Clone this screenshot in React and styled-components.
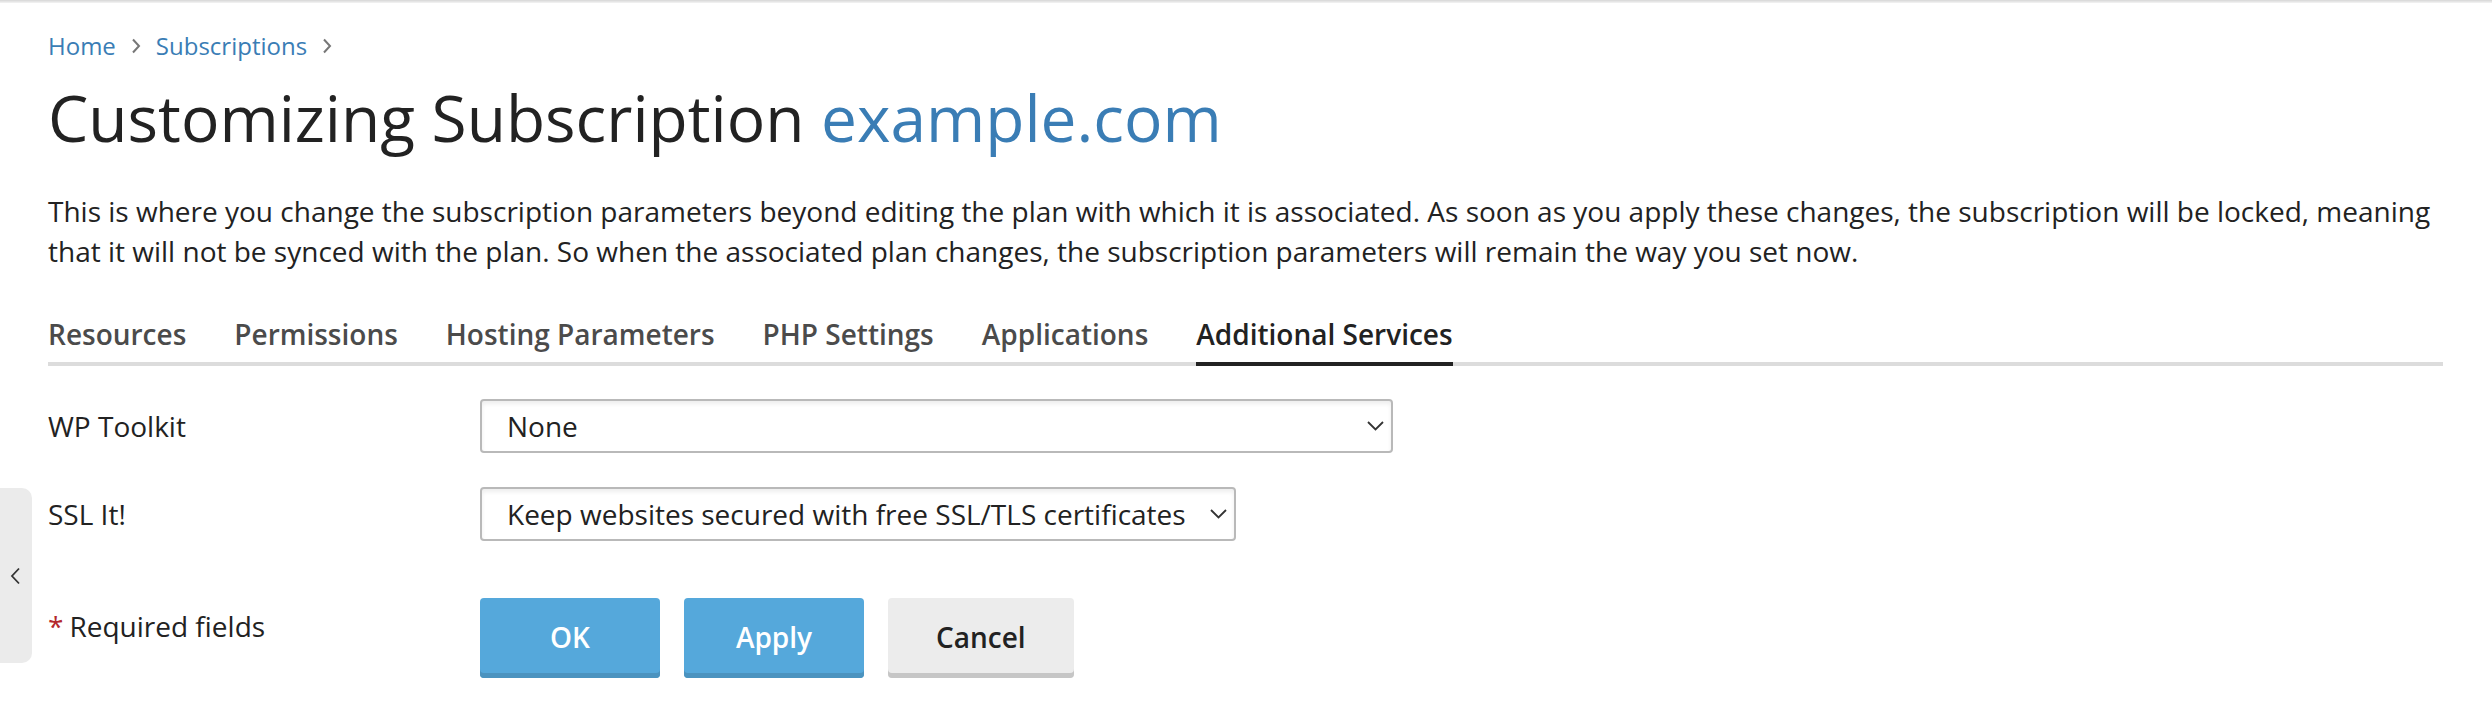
import React from "react";
import styled, { createGlobalStyle } from "styled-components";

const GlobalStyle = createGlobalStyle`
  html, body { margin: 0; padding: 0; background: #fff; }
  body { font-family: "Open Sans", "Noto Sans", sans-serif; color: #222; }
  * { box-sizing: border-box; }
`;

const Page = styled.div`
  position: relative;
  min-height: 712px;
  background: #fff;
`;

const TopEdge = styled.div`
  height: 3px;
  background: linear-gradient(#d6d6d6, #f4f4f4);
`;

const Main = styled.main`
  padding: 25px 49px 0 48px;
`;

const Breadcrumbs = styled.nav`
  display: flex;
  align-items: center;
  gap: 15px;
  font-size: 24px;
  line-height: 35px;
  height: 35px;
`;

const Crumb = styled.a`
  color: #3a7db5;
  text-decoration: none;
`;

const CrumbSep = styled.svg`
  width: 10px;
  height: 16px;
  flex: none;
`;

const Title = styled.h1`
  margin: 15px 0 0;
  font-size: 64px;
  line-height: 80px;
  font-weight: 400;
  color: #222;
  letter-spacing: 0;
`;

const TitleLink = styled.span`
  color: #3a7db5;
`;

const Description = styled.p`
  margin: 33px 0 0;
  font-size: 28px;
  line-height: 40px;
  color: #222;
`;

const Tabs = styled.div`
  display: flex;
  gap: 48px;
  margin-top: 43px;
  border-bottom: 4px solid #dcdcdc;
`;

const Tab = styled.div`
  font-size: 28px;
  line-height: 40px;
  font-weight: 600;
  padding-bottom: 8px;
  margin-bottom: -4px;
  color: ${(p) => (p.$active ? "#222" : "#4b4b4b")};
  border-bottom: 4px solid ${(p) => (p.$active ? "#222" : "transparent")};
`;

const Form = styled.div`
  margin-top: 33px;
  display: flex;
  flex-direction: column;
  gap: 34px;
`;

const Row = styled.div`
  display: flex;
  align-items: ${(p) => (p.$top ? "flex-start" : "center")};
  margin-top: ${(p) => p.$offset || 0}px;
`;

const Label = styled.div`
  width: 432px;
  flex: none;
  font-size: 28px;
  line-height: 40px;
  color: #222;
  padding-top: ${(p) => p.$pad || 0}px;
`;

const Required = styled.span`
  color: #b3282d;
  margin-right: 6px;
`;

const SelectBox = styled.div`
  display: flex;
  align-items: center;
  justify-content: space-between;
  gap: 24px;
  height: 54px;
  width: ${(p) => (p.$width ? `${p.$width}px` : "auto")};
  padding: 0 7px 0 25px;
  border: 2px solid #b9b9b9;
  border-radius: 4px;
  background: #fff;
  box-shadow: inset 0 3px 4px rgba(0, 0, 0, 0.07);
  font-size: 28px;
  line-height: 40px;
  color: #222;
`;

const Chevron = styled.svg`
  width: 17px;
  height: 10px;
  flex: none;
`;

const Buttons = styled.div`
  display: flex;
  gap: 24px;
`;

const Button = styled.button`
  min-width: 180px;
  height: 80px;
  padding: 0 48px 2px;
  border: none;
  border-radius: 4px;
  font-family: "Open Sans", sans-serif;
  font-size: 28px;
  font-weight: 600;
  cursor: pointer;
  background: ${(p) => (p.$primary ? "#55a8db" : "#ececec")};
  color: ${(p) => (p.$primary ? "#fff" : "#222")};
  box-shadow: inset 0 -5px 0 ${(p) => (p.$primary ? "#4b93bf" : "#c6c6c6")};
`;

const SideToggle = styled.div`
  position: absolute;
  left: 0;
  top: 488px;
  width: 32px;
  height: 175px;
  background: #ebebeb;
  border-radius: 0 10px 10px 0;
  display: flex;
  align-items: center;
  justify-content: center;
`;

const ToggleIcon = styled.svg`
  width: 12px;
  height: 18px;
  margin-left: -2px;
`;

const Sep = () => (
  <CrumbSep viewBox="0 0 10 16" fill="none">
    <path d="M2 1.5 L8 8 L2 14.5" stroke="#777" strokeWidth="2" />
  </CrumbSep>
);

const Down = () => (
  <Chevron viewBox="0 0 17 10" fill="none">
    <path d="M1 1 L8.5 8.5 L16 1" stroke="#333" strokeWidth="1.8" />
  </Chevron>
);

export default function App() {
  const tabs = [
    "Resources",
    "Permissions",
    "Hosting Parameters",
    "PHP Settings",
    "Applications",
    "Additional Services",
  ];
  return (
    <Page>
      <GlobalStyle />
      <TopEdge />
      <Main>
        <Breadcrumbs>
          <Crumb href="#">Home</Crumb>
          <Sep />
          <Crumb href="#">Subscriptions</Crumb>
          <Sep />
        </Breadcrumbs>
        <Title>
          Customizing Subscription <TitleLink>example.com</TitleLink>
        </Title>
        <Description>
          This is where you change the subscription parameters beyond editing the plan with which it is associated. As soon as you apply these changes, the subscription will be locked, meaning that it will not be synced with the plan. So when the associated plan changes, the subscription parameters will remain the way you set now.
        </Description>
        <Tabs>
          {tabs.map((t) => (
            <Tab key={t} $active={t === "Additional Services"}>
              {t}
            </Tab>
          ))}
        </Tabs>
        <Form>
          <Row>
            <Label>WP Toolkit</Label>
            <SelectBox $width={913}>
              <span>None</span>
              <Down />
            </SelectBox>
          </Row>
          <Row>
            <Label>SSL It!</Label>
            <SelectBox>
              <span>Keep websites secured with free SSL/TLS certificates</span>
              <Down />
            </SelectBox>
          </Row>
          <Row $top $offset={23}>
            <Label $pad={8}>
              <Required>*</Required>Required fields
            </Label>
            <Buttons>
              <Button $primary>OK</Button>
              <Button $primary>Apply</Button>
              <Button>Cancel</Button>
            </Buttons>
          </Row>
        </Form>
      </Main>
      <SideToggle>
        <ToggleIcon viewBox="0 0 12 18" fill="none">
          <path d="M10 1.5 L3 9 L10 16.5" stroke="#333" strokeWidth="1.8" />
        </ToggleIcon>
      </SideToggle>
    </Page>
  );
}
